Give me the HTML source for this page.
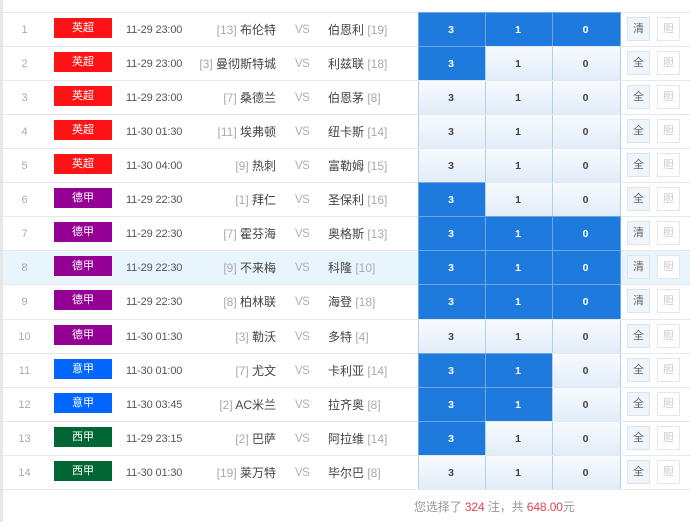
<!DOCTYPE html>
<html>
<head>
<meta charset="utf-8">
<style>
html,body{margin:0;padding:0;background:#fff}
body{width:690px;height:522px;position:relative;overflow:hidden;font-family:"Liberation Sans","Noto Sans CJK SC",sans-serif;font-size:12px;color:#444}
#w{position:absolute;left:0;top:0;width:690px;height:522px;filter:blur(0.3px)}
#strip{position:absolute;left:0;top:0;width:3px;height:522px;background:#e6e6e6}
.r{position:absolute;left:3px;width:687px;height:33px;border-top:1px solid #e8e8e8}
.r.h{background:#e8f5fd}
.r>*{position:absolute}
.n{left:0;width:43px;text-align:center;top:0;line-height:34px;color:#aaa;font-size:11px}
.b{left:51px;top:5px;width:58px;height:20px;line-height:21px;text-align:center;color:#fff;font-size:11px}
.red{background:#fd1316}.pur{background:#930093}.blu{background:#0066ff}.grn{background:#006633}
.t{left:123px;top:0;line-height:34px;font-size:11px;letter-spacing:-0.15px;color:#555;white-space:nowrap}
.hm{right:414px;top:0;line-height:35px;white-space:nowrap;color:#444}
.vs{left:292px;top:0;line-height:35px;color:#b0b0b0;font-size:11.5px;letter-spacing:-0.5px}
.aw{left:325px;top:0;line-height:35px;white-space:nowrap;color:#444}
i{font-style:normal;color:#aaa}
.c{top:0;height:33px;line-height:35px;width:66px;text-align:center;text-indent:-2px;font-weight:bold;font-size:10.5px;color:#444;background:linear-gradient(#f6fafe,#e2edf9);border-left:1px solid #b6cfe9}
.c.s{background:#1f7ade;color:#fff;border-left:1px solid #6aa8ea;border-top:1px solid #6aa8ea;margin-top:-1px}
.c1{left:415px}.c2{left:482px}.c3{left:549px;width:67px;border-right:1px solid #b6cfe9}
.c3.s{border-right:1px solid #6aa8ea}
.q,.d{top:4px;width:21px;height:22px;line-height:23px;text-align:center;border:1px solid #dde3ea;font-size:11px}
.q{left:624px;background:#eff5fb;color:#666}
.d{left:654px;background:#fff;color:#ccc;border-color:#e6e6e6}
.end{position:absolute;left:3px;width:687px;top:489px;border-top:1px solid #e8e8e8}
.sum{position:absolute;left:414px;top:499px;font-size:12px;color:#999;white-space:nowrap;line-height:16px;letter-spacing:-0.1px}
.sum b{font-weight:normal;color:#e6424d}
</style>
</head>
<body>
<div id="w">
<div id="strip"></div>

<div class="r" style="top:12px"><span class="n">1</span><span class="b red">英超</span><span class="t">11-29 23:00</span><span class="hm"><i>[13]</i> 布伦特</span><span class="vs">VS</span><span class="aw">伯恩利 <i>[19]</i></span><span class="c c1 s">3</span><span class="c c2 s">1</span><span class="c c3 s">0</span><span class="q">清</span><span class="d">胆</span></div>

<div class="r" style="top:46px"><span class="n">2</span><span class="b red">英超</span><span class="t">11-29 23:00</span><span class="hm"><i>[3]</i> 曼彻斯特城</span><span class="vs">VS</span><span class="aw">利兹联 <i>[18]</i></span><span class="c c1 s">3</span><span class="c c2">1</span><span class="c c3">0</span><span class="q">全</span><span class="d">胆</span></div>

<div class="r" style="top:80px"><span class="n">3</span><span class="b red">英超</span><span class="t">11-29 23:00</span><span class="hm"><i>[7]</i> 桑德兰</span><span class="vs">VS</span><span class="aw">伯恩茅 <i>[8]</i></span><span class="c c1">3</span><span class="c c2">1</span><span class="c c3">0</span><span class="q">全</span><span class="d">胆</span></div>

<div class="r" style="top:114px"><span class="n">4</span><span class="b red">英超</span><span class="t">11-30 01:30</span><span class="hm"><i>[11]</i> 埃弗顿</span><span class="vs">VS</span><span class="aw">纽卡斯 <i>[14]</i></span><span class="c c1">3</span><span class="c c2">1</span><span class="c c3">0</span><span class="q">全</span><span class="d">胆</span></div>

<div class="r" style="top:148px"><span class="n">5</span><span class="b red">英超</span><span class="t">11-30 04:00</span><span class="hm"><i>[9]</i> 热刺</span><span class="vs">VS</span><span class="aw">富勒姆 <i>[15]</i></span><span class="c c1">3</span><span class="c c2">1</span><span class="c c3">0</span><span class="q">全</span><span class="d">胆</span></div>

<div class="r" style="top:182px"><span class="n">6</span><span class="b pur">德甲</span><span class="t">11-29 22:30</span><span class="hm"><i>[1]</i> 拜仁</span><span class="vs">VS</span><span class="aw">圣保利 <i>[16]</i></span><span class="c c1 s">3</span><span class="c c2">1</span><span class="c c3">0</span><span class="q">全</span><span class="d">胆</span></div>

<div class="r" style="top:216px"><span class="n">7</span><span class="b pur">德甲</span><span class="t">11-29 22:30</span><span class="hm"><i>[7]</i> 霍芬海</span><span class="vs">VS</span><span class="aw">奥格斯 <i>[13]</i></span><span class="c c1 s">3</span><span class="c c2 s">1</span><span class="c c3 s">0</span><span class="q">清</span><span class="d">胆</span></div>

<div class="r h" style="top:250px"><span class="n">8</span><span class="b pur">德甲</span><span class="t">11-29 22:30</span><span class="hm"><i>[9]</i> 不来梅</span><span class="vs">VS</span><span class="aw">科隆 <i>[10]</i></span><span class="c c1 s">3</span><span class="c c2 s">1</span><span class="c c3 s">0</span><span class="q">清</span><span class="d">胆</span></div>

<div class="r" style="top:284px;height:34px"><span class="n">9</span><span class="b pur">德甲</span><span class="t">11-29 22:30</span><span class="hm"><i>[8]</i> 柏林联</span><span class="vs">VS</span><span class="aw">海登 <i>[18]</i></span><span class="c c1 s" style="height:34px">3</span><span class="c c2 s" style="height:34px">1</span><span class="c c3 s" style="height:34px">0</span><span class="q">清</span><span class="d">胆</span></div>

<div class="r" style="top:319px"><span class="n">10</span><span class="b pur">德甲</span><span class="t">11-30 01:30</span><span class="hm"><i>[3]</i> 勒沃</span><span class="vs">VS</span><span class="aw">多特 <i>[4]</i></span><span class="c c1">3</span><span class="c c2">1</span><span class="c c3">0</span><span class="q">全</span><span class="d">胆</span></div>

<div class="r" style="top:353px"><span class="n">11</span><span class="b blu">意甲</span><span class="t">11-30 01:00</span><span class="hm"><i>[7]</i> 尤文</span><span class="vs">VS</span><span class="aw">卡利亚 <i>[14]</i></span><span class="c c1 s">3</span><span class="c c2 s">1</span><span class="c c3">0</span><span class="q">全</span><span class="d">胆</span></div>

<div class="r" style="top:387px"><span class="n">12</span><span class="b blu">意甲</span><span class="t">11-30 03:45</span><span class="hm"><i>[2]</i> AC米兰</span><span class="vs">VS</span><span class="aw">拉齐奥 <i>[8]</i></span><span class="c c1 s">3</span><span class="c c2 s">1</span><span class="c c3">0</span><span class="q">全</span><span class="d">胆</span></div>

<div class="r" style="top:421px"><span class="n">13</span><span class="b grn">西甲</span><span class="t">11-29 23:15</span><span class="hm"><i>[2]</i> 巴萨</span><span class="vs">VS</span><span class="aw">阿拉维 <i>[14]</i></span><span class="c c1 s">3</span><span class="c c2">1</span><span class="c c3">0</span><span class="q">全</span><span class="d">胆</span></div>

<div class="r" style="top:455px"><span class="n">14</span><span class="b grn">西甲</span><span class="t">11-30 01:30</span><span class="hm"><i>[19]</i> 莱万特</span><span class="vs">VS</span><span class="aw">毕尔巴 <i>[8]</i></span><span class="c c1">3</span><span class="c c2">1</span><span class="c c3">0</span><span class="q">全</span><span class="d">胆</span></div>

<div class="end"></div>
<div class="sum">您选择了 <b>324</b> 注，共 <b>648.00</b>元</div>
</div>
</body>
</html>
